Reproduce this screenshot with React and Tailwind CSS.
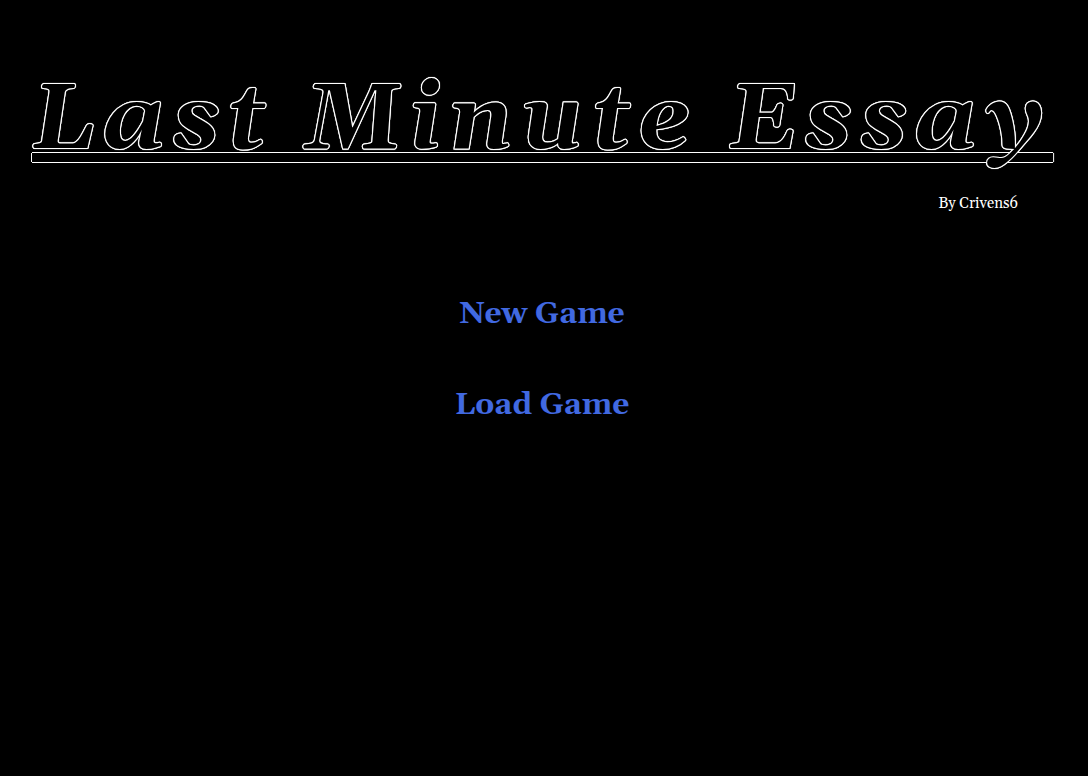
// Title screen
const MENU = [
  { label: "New Game", href: "#new" },
  { label: "Load Game", href: "#load" },
];

export default function App() {
  return (
    <div className="min-h-screen bg-black text-white font-['Georgia','Gelasio','Liberation_Serif',serif] flex flex-col px-8 pt-16">
      {/* Black letters, only the white edge shows */}
      <h1 className="whitespace-nowrap text-[92px] leading-[114px] font-bold italic tracking-[8px] underline decoration-black [text-decoration-skip-ink:none] text-black [paint-order:stroke_fill] [-webkit-text-stroke:2px_white] [text-shadow:-1px_0_1px_white,1px_0_1px_white,0_-1px_1px_white,0_1px_1px_white]">
        Last Minute Essay
      </h1>

      <p className="self-end mr-[38px] mt-[14px] text-[15px] leading-6">By Crivens6</p>

      <nav className="mt-[78px] mr-1 flex flex-col items-center gap-[51px]">
        {MENU.map(({ label, href }) => (
          <a
            key={label}
            href={href}
            className="text-[30px] leading-10 font-bold text-[#4169e1] hover:underline"
          >
            {label}
          </a>
        ))}
      </nav>
    </div>
  );
}
